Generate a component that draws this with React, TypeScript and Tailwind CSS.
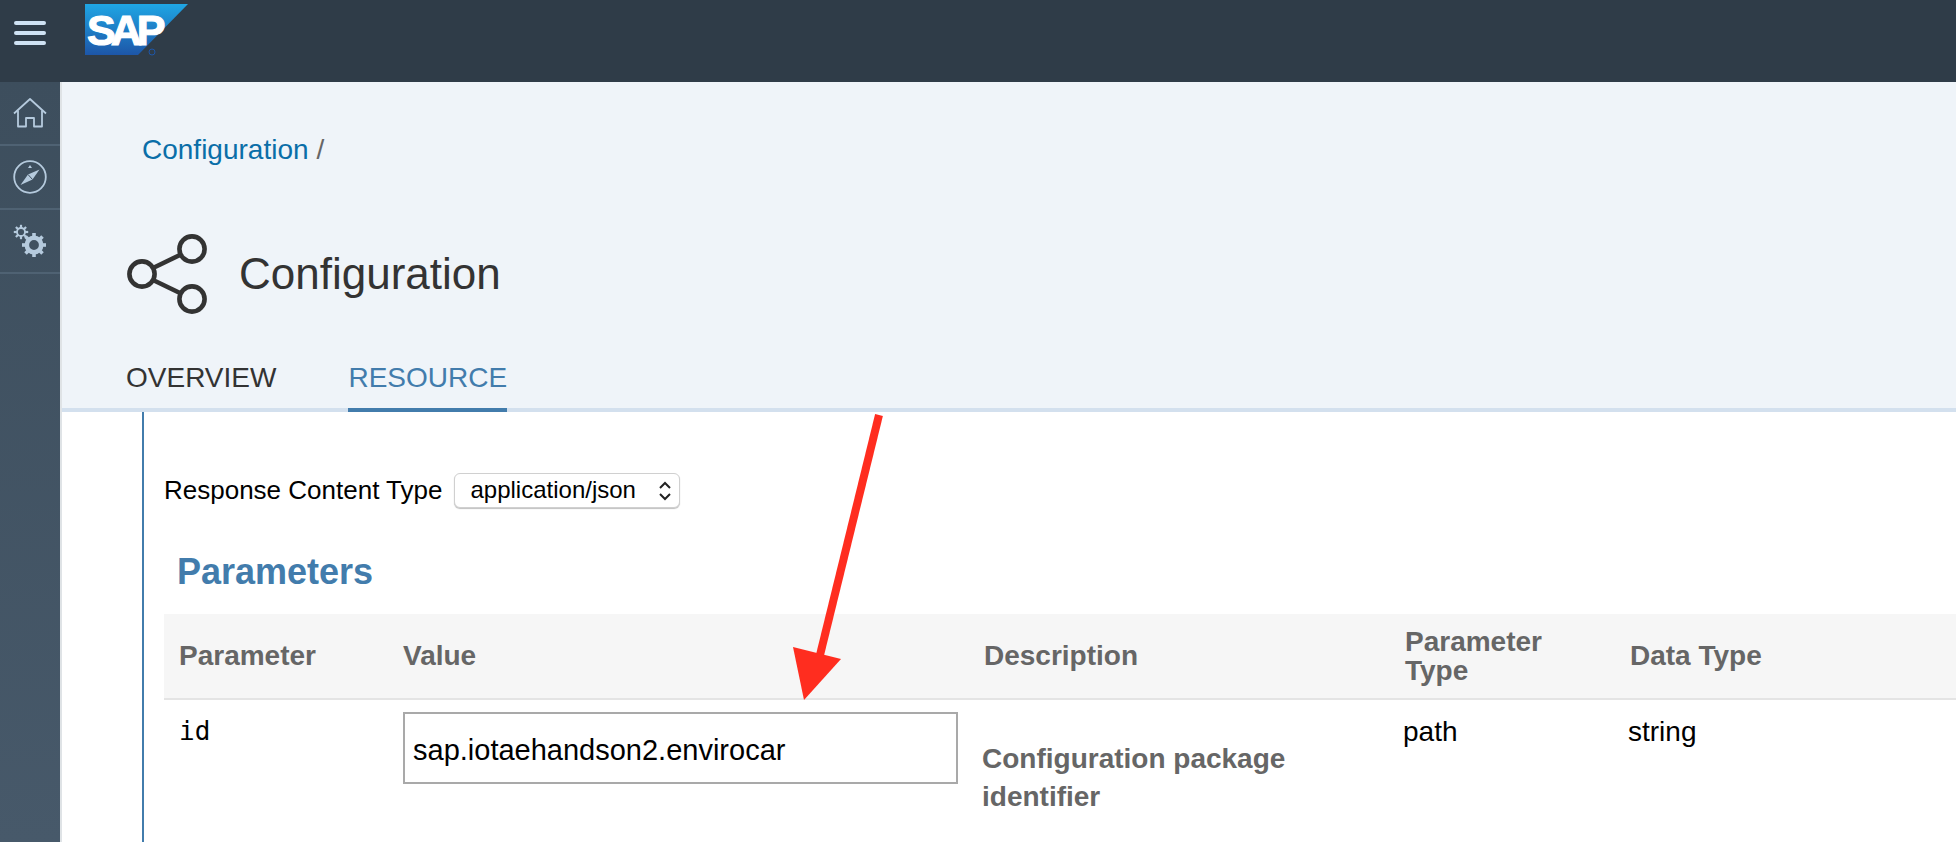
const sans = "font-['Liberation_Sans',Arial,sans-serif]"

function SapLogo() {
  return (
    <svg width="106" height="54" viewBox="0 0 106 54" className="absolute left-[84px] top-[4px]">
      <defs>
        <linearGradient id="sapFill" x1="0" y1="0" x2="0" y2="1">
          <stop offset="0" stopColor="#1fa6e4" />
          <stop offset="1" stopColor="#1d56a8" />
        </linearGradient>
      </defs>
      <polygon points="1,0 104,0 54,51 1,51" fill="url(#sapFill)" />
      <text
        x="3"
        y="41"
        fill="#ffffff"
        stroke="#ffffff"
        strokeWidth="1.2"
        fontFamily="'Liberation Sans', Arial, sans-serif"
        fontWeight="700"
        fontSize="43"
        letterSpacing="-5"
      >
        SAP
      </text>
      <circle cx="68" cy="48" r="3" fill="none" stroke="#1d56a8" strokeWidth="1" />
    </svg>
  )
}

function HomeIcon() {
  return (
    <svg width="34" height="30" viewBox="0 0 34 30" fill="none" stroke="#b5cadd" strokeWidth="1.8">
      <path d="M1 15.5 17 1l16 14.5" strokeLinejoin="round" />
      <path d="M5 12.5V28.5H13V20H21V28.5H29V12.5" strokeLinejoin="round" />
    </svg>
  )
}

function CompassIcon() {
  return (
    <svg width="34" height="34" viewBox="0 0 34 34" fill="none">
      <circle cx="17" cy="17" r="15.8" stroke="#b5cadd" strokeWidth="1.8" />
      <path d="M7.5 25 15 14.5 26.5 9.5 19.5 19.5Z" fill="#b5cadd" />
      <path d="M15 14.5 19.5 19.5" stroke="#3f5161" strokeWidth="1" />
      <path d="M17 5 19 8H15Z" fill="#b5cadd" />
    </svg>
  )
}

function Gear({ cx, cy, r, ring, outer, tooth }: { cx: number; cy: number; r: number; ring: number; outer: number; tooth: number }) {
  const spokes = Array.from({ length: 8 }, (_, i) => {
    const a = (i * 2 * Math.PI) / 8
    return (
      <line
        key={i}
        x1={cx + Math.cos(a) * r}
        y1={cy + Math.sin(a) * r}
        x2={cx + Math.cos(a) * outer}
        y2={cy + Math.sin(a) * outer}
        stroke="#b5cadd"
        strokeWidth={tooth}
      />
    )
  })
  return (
    <g>
      {spokes}
      <circle cx={cx} cy={cy} r={r} fill="none" stroke="#b5cadd" strokeWidth={ring} />
    </g>
  )
}

function GearsIcon() {
  return (
    <svg width="34" height="34" viewBox="0 0 34 34">
      <Gear cx={8} cy={8} r={4} ring={1.8} outer={7.2} tooth={2.2} />
      <Gear cx={21} cy={21} r={7.2} ring={4.6} outer={12} tooth={3.6} />
    </svg>
  )
}

function ShareIcon() {
  return (
    <svg width="84" height="84" viewBox="0 0 84 84" fill="none" stroke="#333333" strokeWidth="4.6" className="shrink-0">
      <circle cx="16" cy="42" r="12.6" />
      <circle cx="66" cy="17" r="12.6" />
      <circle cx="66" cy="67" r="12.6" />
      <line x1="27" y1="36" x2="55" y2="22.5" />
      <line x1="27" y1="48" x2="55" y2="61.5" />
    </svg>
  )
}

function NavItem({ children }: { children: React.ReactNode }) {
  return (
    <div className="h-[64px] flex items-center justify-center border-b-2 border-[#4f6273]">{children}</div>
  )
}

export default function App() {
  return (
    <div className={`${sans} relative h-screen w-full overflow-hidden flex flex-col bg-white`}>
      {/* Shell bar */}
      <header className="relative h-[82px] shrink-0 bg-[#2f3c48]">
        <div className="absolute left-[14px] top-[21px] w-[32px] flex flex-col gap-[6px]">
          <span className="h-[4px] rounded-full bg-[#cfe2f3]" />
          <span className="h-[4px] rounded-full bg-[#cfe2f3]" />
          <span className="h-[4px] rounded-full bg-[#cfe2f3]" />
        </div>
        <SapLogo />
      </header>

      <div className="flex flex-1 min-h-0">
        {/* Side nav */}
        <nav className="w-[60px] shrink-0 bg-gradient-to-b from-[#3d4e5d] to-[#47596a]">
          <NavItem>
            <HomeIcon />
          </NavItem>
          <NavItem>
            <CompassIcon />
          </NavItem>
          <NavItem>
            <GearsIcon />
          </NavItem>
        </nav>

        <main className="flex-1 min-w-0 flex flex-col border-l-2 border-[#dfe3e6]">
          {/* Object page header */}
          <section className="h-[330px] shrink-0 bg-[#eff4f9] border-b-4 border-[#d3e0ee] flex flex-col">
            <div className="pl-[80px] pt-[50px] h-[85px] text-[28px] leading-[36px] text-[#333333]">
              <span className="text-[#0a6ea8]">Configuration</span>
              <span className="ml-[8px] text-[#666666]">/</span>
            </div>
            <div className="ml-[64px] mt-[65px] h-[84px] flex items-center">
              <ShareIcon />
              <h1 className="ml-[29px] text-[44px] leading-[50px] font-normal text-[#333333]">Configuration</h1>
            </div>
            <div className="ml-[64px] mt-auto flex gap-[72px] text-[28px] leading-[30px] -mb-1">
              <div className="pb-[19px] text-[#333333]">OVERVIEW</div>
              <div className="pb-[15px] text-[#427cac] border-b-4 border-[#427cac]">RESOURCE</div>
            </div>
          </section>

          {/* Resource body */}
          <section className="ml-[80px] flex-1 min-h-0 border-l-2 border-[#427cac] pl-[20px]">
            <div className="mt-[60px] h-[36px] flex items-center">
              <span className="text-[26px] text-black">Response Content Type</span>
              <div className="relative ml-[12px] h-[35px] w-[226px] rounded-[6px] border border-[#d0d0d0] bg-white shadow-[0_1px_1px_rgba(0,0,0,0.25)] flex items-center">
                <span className="pl-[15px] text-[24px] text-black">application/json</span>
                <svg
                  width="14"
                  height="22"
                  viewBox="0 0 14 22"
                  fill="none"
                  stroke="#222222"
                  strokeWidth="2"
                  className="absolute right-[7px] top-[6px]"
                >
                  <path d="M2 8 7 3l5 5" />
                  <path d="M2 14l5 5 5-5" />
                </svg>
              </div>
            </div>

            <h2 className="ml-[13px] mt-[44px] text-[36px] leading-[40px] font-bold text-[#427cac]">Parameters</h2>

            <div className="mt-[22px] h-[86px] bg-[#f6f6f6] border-b-2 border-[#e4e4e4] grid grid-cols-[224px_581px_421px_225px_1fr] items-center text-[28px] font-bold text-[#666666]">
              <div className="pl-[15px]">Parameter</div>
              <div className="pl-[15px]">Value</div>
              <div className="pl-[15px]">Description</div>
              <div className="pl-[15px] leading-[29px]">
                Parameter
                <br />
                Type
              </div>
              <div className="pl-[15px]">Data Type</div>
            </div>

            <div className="grid grid-cols-[224px_581px_421px_225px_1fr] items-start text-[28px] text-black">
              <div className="pl-[15px] pt-[16px] leading-[30px] text-[26px] font-['DejaVu_Sans_Mono',monospace]">id</div>
              <div className="pl-[15px] pt-[12px]">
                <div className="h-[72px] w-[555px] border-2 border-[#a9a9a9] bg-white pl-[8px] pt-[5px] flex items-center text-[29px]">
                  sap.iotaehandson2.envirocar
                </div>
              </div>
              <div className="pl-[13px] pt-[40px] leading-[38px] font-bold text-[#666666]">
                Configuration package
                <br />
                identifier
              </div>
              <div className="pl-[13px] pt-[17px] leading-[30px]">path</div>
              <div className="pl-[13px] pt-[17px] leading-[30px]">string</div>
            </div>
          </section>
        </main>
      </div>

      {/* Annotation arrow */}
      <svg width="1956" height="842" viewBox="0 0 1956 842" className="absolute inset-0 pointer-events-none">
        <line x1="879" y1="415" x2="820" y2="655" stroke="#ff2d1f" strokeWidth="8" />
        <polygon points="793,647 841,659 804,700" fill="#ff2d1f" />
      </svg>
    </div>
  )
}
